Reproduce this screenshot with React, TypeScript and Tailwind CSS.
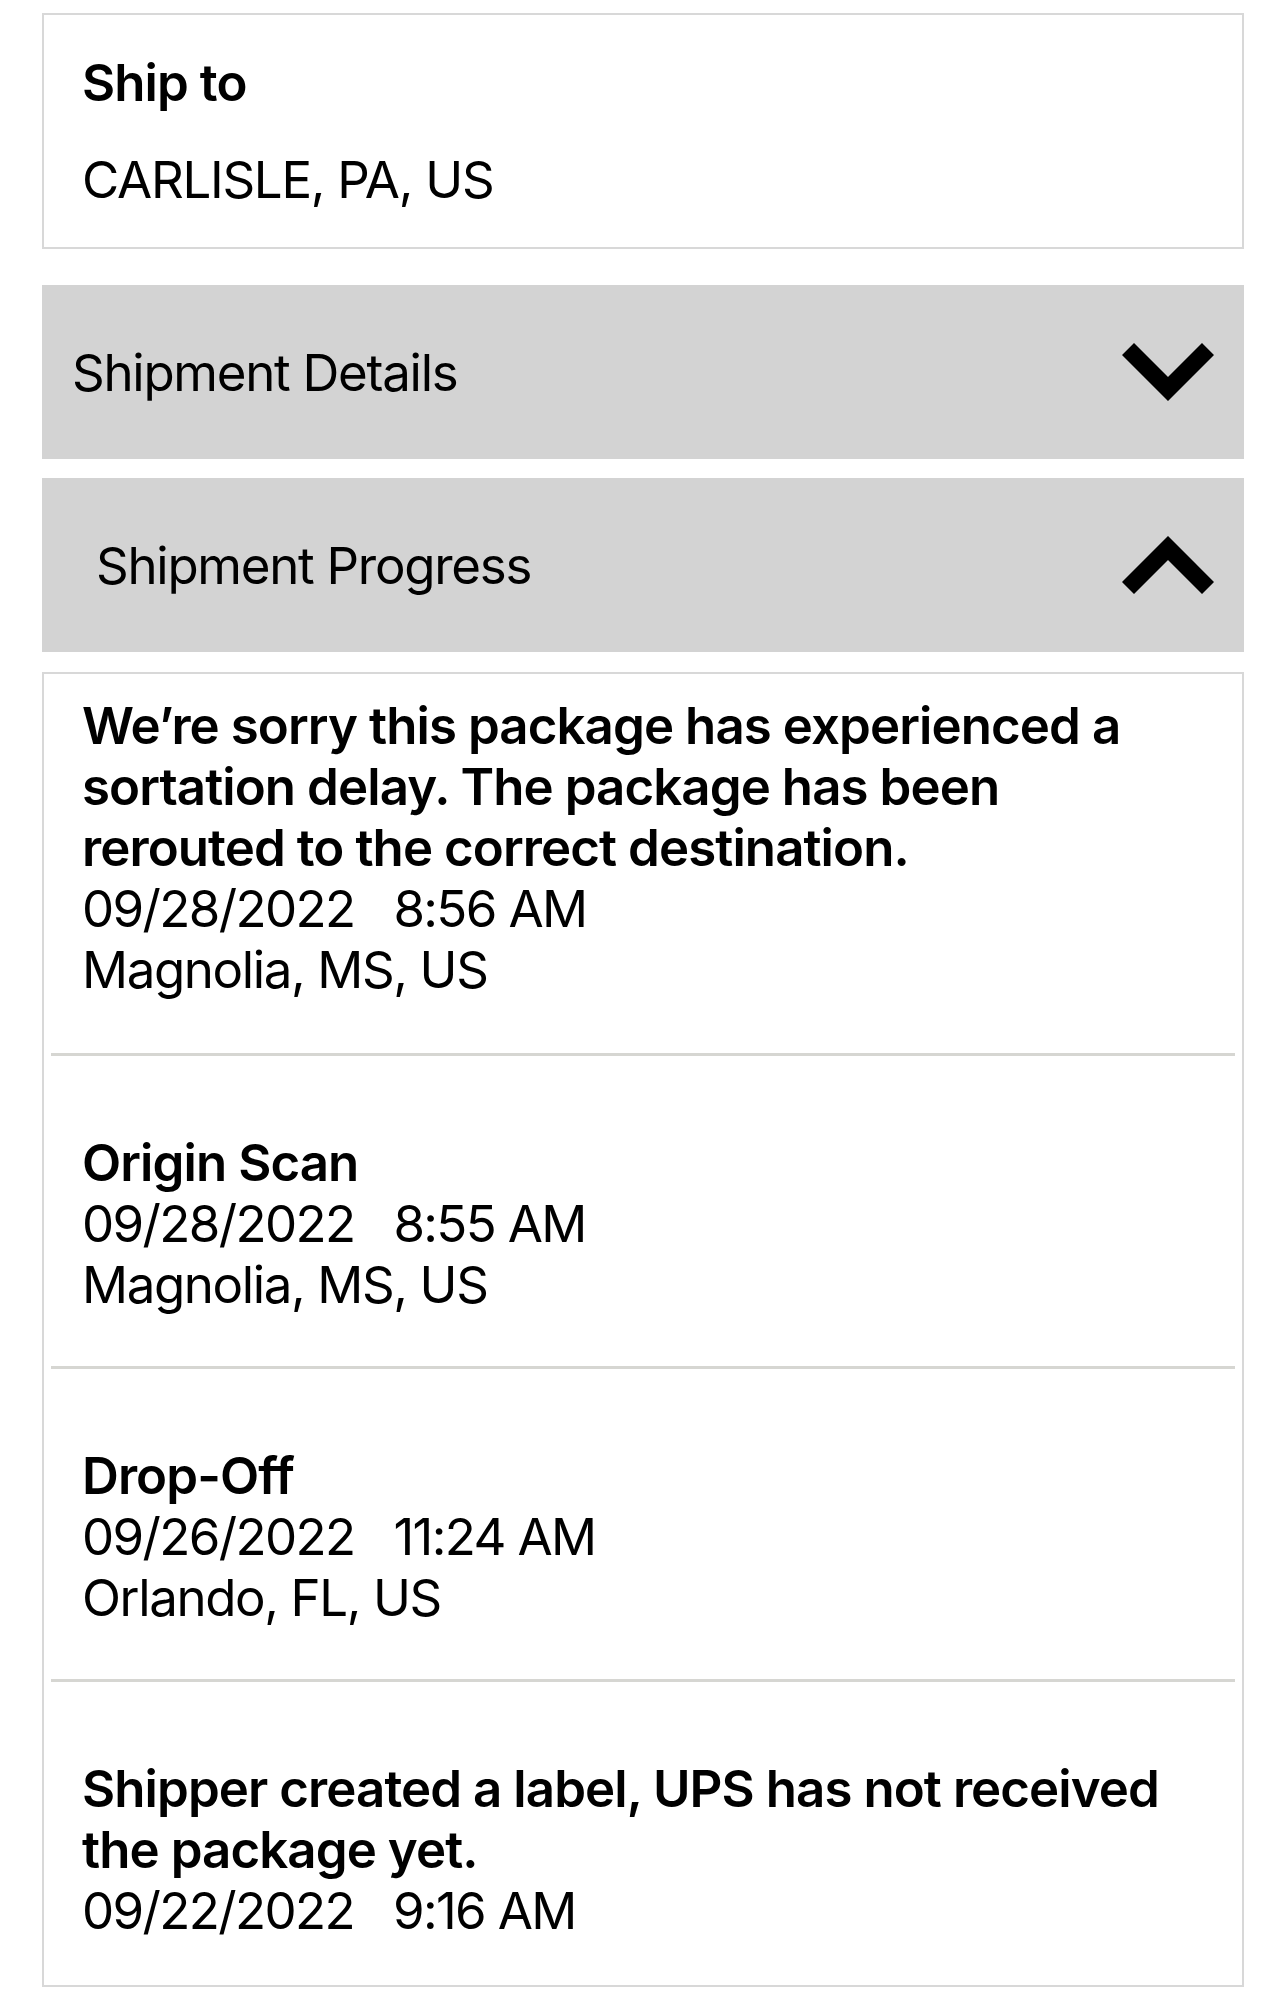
import type { ReactNode } from "react";

type TrackingEvent = {
  title: string;
  date: string;
  time: string;
  place?: string;
};

const events: TrackingEvent[] = [
  {
    title:
      "We’re sorry this package has experienced a sortation delay. The package has been rerouted to the correct destination.",
    date: "09/28/2022",
    time: "8:56 AM",
    place: "Magnolia, MS, US",
  },
  { title: "Origin Scan", date: "09/28/2022", time: "8:55 AM", place: "Magnolia, MS, US" },
  { title: "Drop-Off", date: "09/26/2022", time: "11:24 AM", place: "Orlando, FL, US" },
  {
    title: "Shipper created a label, UPS has not received the package yet.",
    date: "09/22/2022",
    time: "9:16 AM",
  },
];

// Thick chevron drawn as a stroked polyline
function Chevron({ up }: { up?: boolean }) {
  return (
    <svg width="92" height="58" viewBox="0 0 92 58" fill="none" aria-hidden="true">
      <polyline
        points={up ? "6,52 46,12 86,52" : "6,6 46,46 86,6"}
        stroke="#000"
        strokeWidth="17"
        strokeLinecap="butt"
        strokeLinejoin="miter"
      />
    </svg>
  );
}

function AccordionHeader({ label, open, indent }: { label: string; open?: boolean; indent: string }) {
  return (
    <button
      type="button"
      className={`flex h-[174px] w-full items-center justify-between bg-[#d3d3d3] pr-[30px] text-left ${indent}`}
    >
      <span className="text-[51px] leading-[61px] tracking-[-0.025em] text-black">{label}</span>
      <Chevron up={open} />
    </button>
  );
}

function Panel({ children, className = "" }: { children: ReactNode; className?: string }) {
  return <div className={`border-2 border-[#d8d8d8] bg-white ${className}`}>{children}</div>;
}

export default function App() {
  return (
    <div className="min-h-[2000px] bg-white pt-[13px] font-[Inter,sans-serif] text-black">
      <div className="ml-[42px] w-[1202px]">
        {/* Ship to */}
        <Panel className="px-[38px] pt-[37px] pb-[37px]">
          <h2 className="text-[51px] font-semibold leading-[61px] tracking-[-0.018em]">Ship to</h2>
          <p className="mt-[36px] text-[51px] leading-[61px] tracking-[-0.025em]">CARLISLE, PA, US</p>
        </Panel>

        <div className="mt-[36px]">
          <AccordionHeader label="Shipment Details" indent="pl-[30px]" />
        </div>
        <div className="mt-[19px]">
          <AccordionHeader label="Shipment Progress" open indent="pl-[54px]" />
        </div>

        {/* Progress list */}
        <Panel className="mt-[20px]">
          {events.map((ev, i) => (
            <div key={ev.date + ev.time}>
              {i > 0 && <div className="mx-[7px] h-[3px] bg-[#d6d6d2]" />}
              <div
                className={`px-[38px] text-[51px] leading-[61px] tracking-[-0.027em] ${
                  i === 0 ? "pt-[21px]" : "pt-[76px]"
                } ${i === 0 ? "pb-[53px]" : i === events.length - 1 ? "pb-[44px]" : "pb-[51px]"}`}
              >
                <p className="font-semibold tracking-[-0.018em]">{ev.title}</p>
                <p className="tracking-[-0.032em]">
                  {ev.date}
                  <span className="ml-[39px]">{ev.time}</span>
                </p>
                {ev.place && <p>{ev.place}</p>}
              </div>
            </div>
          ))}
        </Panel>
      </div>
    </div>
  );
}
